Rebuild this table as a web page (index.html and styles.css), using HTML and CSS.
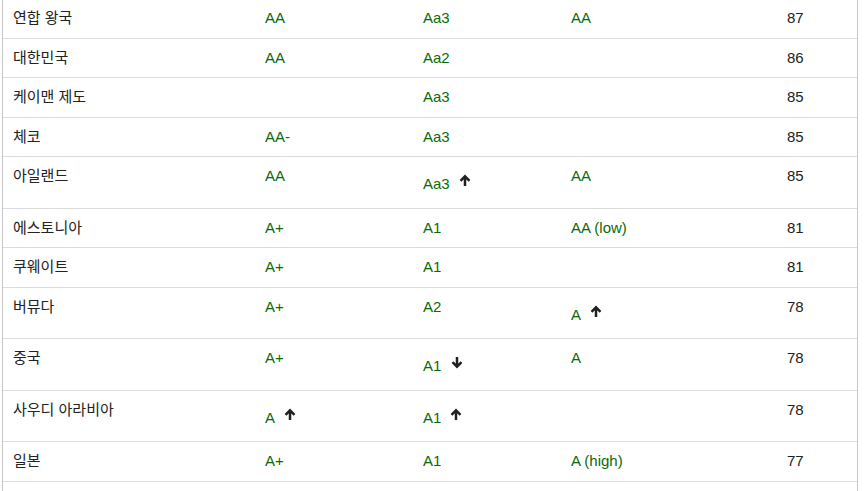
FILE: index.html
```html
<!DOCTYPE html>
<html lang="ko">
<head>
<meta charset="utf-8">
<title>신용등급</title>
<link rel="stylesheet" href="styles.css">
</head>
<body>
<div class="frame">
<table class="grid">
<colgroup>
<col class="c1"><col class="c2"><col class="c3"><col class="c4"><col class="c5">
</colgroup>
<tbody>
<tr><td>연합 왕국</td><td class="g">AA</td><td class="g">Aa3</td><td class="g">AA</td><td>87</td></tr>
<tr><td>대한민국</td><td class="g">AA</td><td class="g">Aa2</td><td class="g"></td><td>86</td></tr>
<tr><td>케이맨 제도</td><td class="g"></td><td class="g">Aa3</td><td class="g"></td><td>85</td></tr>
<tr><td>체코</td><td class="g">AA-</td><td class="g">Aa3</td><td class="g"></td><td>85</td></tr>
<tr><td>아일랜드</td><td class="g">AA</td><td class="g drop">Aa3<svg class="arr" viewBox="0 0 12 12"><path d="M6 12V2.5M1.5 6.8L6 2.3 10.5 6.8"/></svg></td><td class="g">AA</td><td>85</td></tr>
<tr><td>에스토니아</td><td class="g">A+</td><td class="g">A1</td><td class="g">AA (low)</td><td>81</td></tr>
<tr><td>쿠웨이트</td><td class="g">A+</td><td class="g">A1</td><td class="g"></td><td>81</td></tr>
<tr><td>버뮤다</td><td class="g">A+</td><td class="g">A2</td><td class="g drop">A<svg class="arr" viewBox="0 0 12 12"><path d="M6 12V2.5M1.5 6.8L6 2.3 10.5 6.8"/></svg></td><td>78</td></tr>
<tr><td>중국</td><td class="g">A+</td><td class="g drop">A1<svg class="arr dn" viewBox="0 0 12 12"><path d="M6 0V9.5M1.5 5.2L6 9.7 10.5 5.2"/></svg></td><td class="g">A</td><td>78</td></tr>
<tr><td>사우디 아라비아</td><td class="g drop">A<svg class="arr" viewBox="0 0 12 12"><path d="M6 12V2.5M1.5 6.8L6 2.3 10.5 6.8"/></svg></td><td class="g drop">A1<svg class="arr" viewBox="0 0 12 12"><path d="M6 12V2.5M1.5 6.8L6 2.3 10.5 6.8"/></svg></td><td class="g"></td><td>78</td></tr>
<tr><td>일본</td><td class="g">A+</td><td class="g">A1</td><td class="g">A (high)</td><td>77</td></tr>
<tr><td>&nbsp;</td><td class="g"></td><td class="g"></td><td class="g"></td><td></td></tr>
</tbody>
</table>
</div>
</body>
</html>
```
FILE: styles.css
```css
html, body {
  margin: 0;
  padding: 0;
  background: #fff;
}
body {
  font-family: "Liberation Sans", Arial, "Noto Sans CJK KR", sans-serif;
  font-size: 15px;
  color: #222;
}
.frame {
  margin-left: 2px;
  width: 854px;
  border-left: 1px solid #c8c8c8;
  border-right: 1px solid #c8c8c8;
}
.grid {
  width: 100%;
  border-collapse: collapse;
  table-layout: fixed;
  margin-top: -1px;
}
.c1 { width: 252px; }
.c2 { width: 158px; }
.c3 { width: 148px; }
.c4 { width: 216px; }
.c5 { width: auto; }
.grid td {
  padding: 9px 10px 10px;
  line-height: 19.5px;
  vertical-align: top;
  border-bottom: 1px solid #dcdcdc;
  white-space: nowrap;
}
.grid td.g {
  color: #0a6a0a;
}
.grid td.drop {
  padding-top: 17px;
  padding-bottom: 14px;
}
.arr {
  width: 12px;
  height: 12px;
  margin-left: 9px;
  vertical-align: 3px;
  fill: none;
  stroke: #202122;
  stroke-width: 2.5;
}
.arr.dn {
  margin-left: 10px;
  vertical-align: 2px;
}
```
